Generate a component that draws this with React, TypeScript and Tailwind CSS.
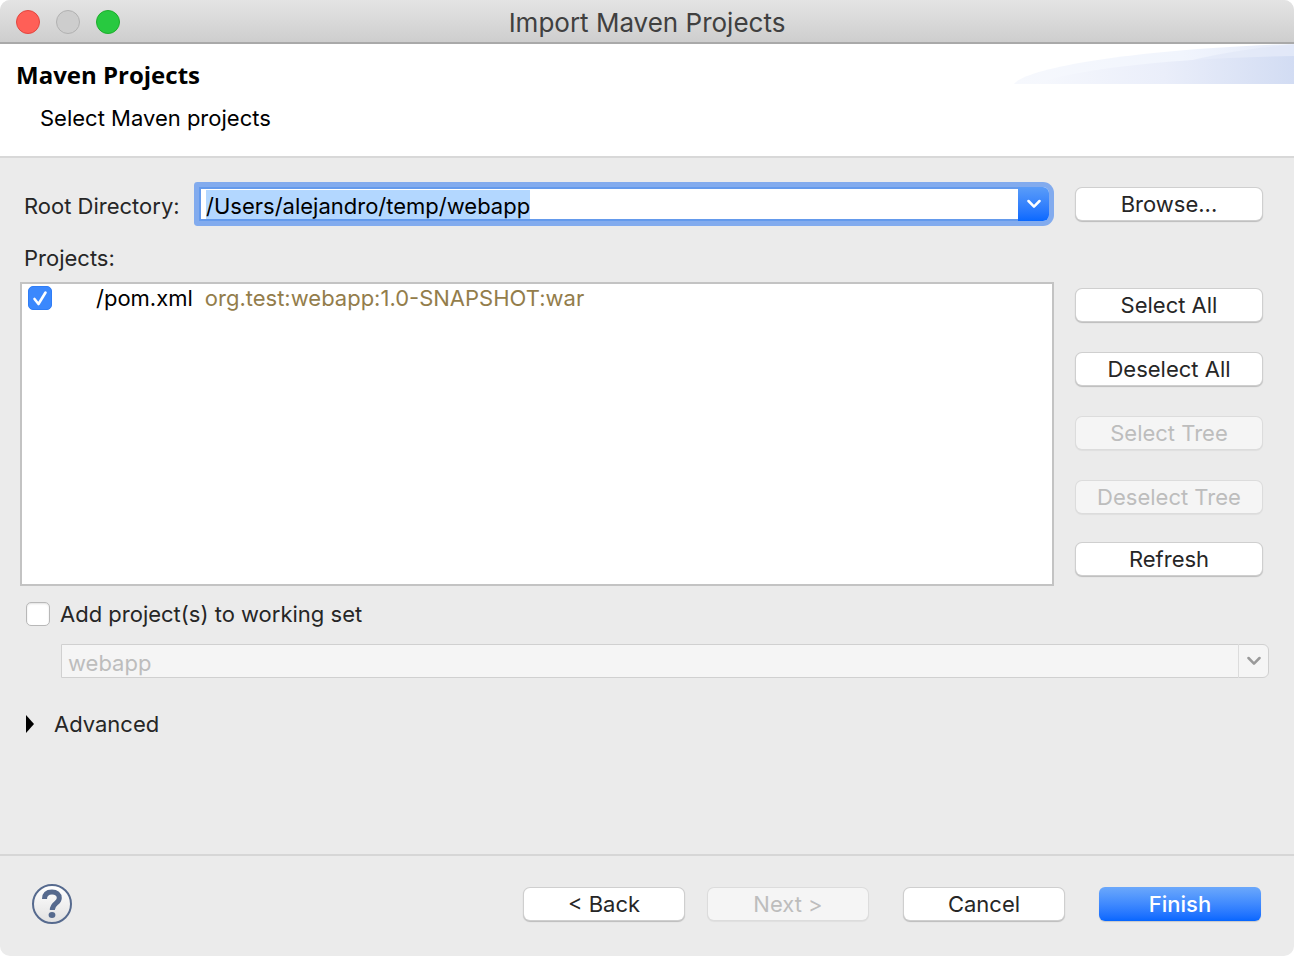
import { useEffect, useRef, useState } from "react";
import type { ButtonHTMLAttributes } from "react";
import clsx from "clsx";

type DialogButtonProps = ButtonHTMLAttributes<HTMLButtonElement> & {
  primary?: boolean;
};

function DialogButton({ primary, className, ...props }: DialogButtonProps) {
  return (
    <button
      type="button"
      className={clsx(
        "rounded-md text-center",
        primary
          ? "h-[34px] bg-linear-to-b from-[#6ba8fb] to-[#0566ff] leading-[34px] font-medium text-white shadow-[0_1px_1px_rgba(0,0,0,0.15)]"
          : "h-8 bg-white leading-8 text-[#262626] shadow-[0_0_0_1px_#cfcfcf,0_1px_1px_1px_rgba(0,0,0,0.2)] disabled:bg-[#f5f5f5] disabled:text-[#bdbdbd] disabled:shadow-[0_0_0_1px_#dcdcdc,0_1px_1px_1px_rgba(0,0,0,0.05)]",
        className,
      )}
      {...props}
    />
  );
}

function Chevron() {
  return (
    <svg width="14" height="10" viewBox="0 0 14 10" fill="none" aria-hidden="true">
      <path
        d="M1.5 2 7 7.6 12.5 2"
        stroke="currentColor"
        strokeWidth="2.5"
        strokeLinecap="round"
        strokeLinejoin="round"
      />
    </svg>
  );
}

function HeaderSwoosh() {
  return (
    <svg width="280" height="40" viewBox="0 0 280 40" aria-hidden="true">
      <defs>
        <linearGradient id="swoosh-back" x1="0" x2="1">
          <stop offset="0" stopColor="#f6f8fd" />
          <stop offset="0.6" stopColor="#f1f5fd" />
          <stop offset="1" stopColor="#e4eaf9" />
        </linearGradient>
        <linearGradient id="swoosh-front" x1="0" x2="1">
          <stop offset="0" stopColor="#f6f8fd" />
          <stop offset="0.5" stopColor="#eaeefa" />
          <stop offset="1" stopColor="#d2dcf3" />
        </linearGradient>
      </defs>
      <path d="M0 40C12 24 120 5 280 0V40Z" fill="url(#swoosh-back)" />
      <path d="M170 18C210 8 245 3 280 1V18Z" fill="#dfe6f7" opacity="0.6" />
      <path d="M20 40C60 26 150 14 280 12V40Z" fill="url(#swoosh-front)" />
    </svg>
  );
}

function TitleBar() {
  return (
    <div className="flex h-11 items-center border-b-2 border-[#a9a9a9] bg-linear-to-b from-[#e4e4e4] to-[#cecece] px-4 pt-0.5">
      <div className="flex flex-1 gap-4">
        <button type="button" aria-label="Close" className="size-6 rounded-full border border-[#e2463f] bg-[#ff5f57]" />
        <button
          type="button"
          aria-label="Minimize"
          disabled
          className="size-6 rounded-full border border-[#b1b1b1] bg-[#cdcdcd]"
        />
        <button type="button" aria-label="Zoom" className="size-6 rounded-full border border-[#1dad2b] bg-[#28c940]" />
      </div>
      <div className="pt-0.5 text-[26px] text-[#404040]">Import Maven Projects</div>
      <div className="flex-1" />
    </div>
  );
}

export default function App() {
  const rootRef = useRef<HTMLInputElement>(null);
  const [root, setRoot] = useState("/Users/alejandro/temp/webapp");
  const [pomChecked, setPomChecked] = useState(true);
  const [addToSet, setAddToSet] = useState(false);

  useEffect(() => {
    rootRef.current?.focus();
    rootRef.current?.select();
  }, []);

  return (
    <div className="min-h-screen bg-white font-['Inter','Liberation_Sans',sans-serif] text-[22px] leading-8 text-[#262626]">
      <div className="flex min-h-screen flex-col overflow-hidden rounded-[10px] bg-[#ebebeb]">
        <TitleBar />

        <header className="flex h-[114px] justify-between border-b-2 border-[#d8d8d8] bg-white text-black">
          <div className="pt-[15px] pl-4">
            <h1 className="font-['Open_Sans','Noto_Sans',sans-serif] text-2xl leading-8 font-bold">Maven Projects</h1>
            <p className="pt-[11px] pl-6">Select Maven projects</p>
          </div>
          <HeaderSwoosh />
        </header>

        <main className="flex-1 pt-7 pr-8 pl-5">
          <div className="flex items-center">
            <label htmlFor="root-directory" className="w-[179px] pt-1 pl-1 whitespace-nowrap">
              Root Directory:
            </label>
            <div className="flex h-[34px] min-w-0 flex-1 rounded-l-[1px] rounded-r-md bg-white ring-5 ring-[#82abee]">
              <input
                id="root-directory"
                ref={rootRef}
                type="text"
                value={root}
                onChange={(e) => setRoot(e.target.value)}
                className="min-w-0 flex-1 border-2 border-r-0 border-[#649aec] pt-1 pl-[5px] text-black outline-none selection:bg-[#b3d7ff] selection:text-black"
              />
              <button
                type="button"
                aria-label="Show root directories"
                className="flex w-[31px] items-center justify-center rounded-r-md bg-linear-to-b from-[#5a9cf8] to-[#0768ff] text-white"
              >
                <Chevron />
              </button>
            </div>
            <DialogButton className="ml-[27px] w-[186px]">Browse...</DialogButton>
          </div>

          <div className="pt-5 pl-1">Projects:</div>

          <div className="mt-2 flex gap-[22px]">
            <div className="h-[304px] min-w-0 flex-1 border-2 border-[#c3c3c3] bg-white text-black">
              <label className="flex h-7 items-center pl-1.5">
                <span className="relative flex size-6">
                  <input
                    type="checkbox"
                    checked={pomChecked}
                    onChange={(e) => setPomChecked(e.target.checked)}
                    className="peer size-6 appearance-none rounded-[5px] border border-[#b5b5b5] bg-white checked:border-[#2f7df6] checked:bg-[#3b88fd]"
                  />
                  <svg
                    viewBox="0 0 24 24"
                    fill="none"
                    aria-hidden="true"
                    className="pointer-events-none absolute inset-0 hidden peer-checked:block"
                  >
                    <path
                      d="M6.5 13 10.5 18 17.5 6.5"
                      stroke="white"
                      strokeWidth="2.6"
                      strokeLinecap="round"
                      strokeLinejoin="round"
                    />
                  </svg>
                </span>
                <span className="pl-11">/pom.xml</span>
                <span className="pl-3 text-[#937d4b]">org.test:webapp:1.0-SNAPSHOT:war</span>
              </label>
            </div>

            <div className="flex w-[186px] flex-col gap-8 pt-[7px]">
              <DialogButton>Select All</DialogButton>
              <DialogButton>Deselect All</DialogButton>
              <DialogButton disabled>Select Tree</DialogButton>
              <DialogButton disabled>Deselect Tree</DialogButton>
              <DialogButton className="-mt-0.5">Refresh</DialogButton>
            </div>
          </div>

          <label className="mt-3 flex w-fit items-center pl-1.5">
            <input
              type="checkbox"
              checked={addToSet}
              onChange={(e) => setAddToSet(e.target.checked)}
              className="size-6 appearance-none rounded-[5px] border border-[#b8b8b8] bg-white shadow-[inset_0_1px_2px_rgba(0,0,0,0.12)] checked:border-[#2f7df6] checked:bg-[#3b88fd]"
            />
            <span className="pl-2.5">Add project(s) to working set</span>
          </label>

          <div className="relative mt-3.5 -mr-[7px] ml-[41px] flex text-[#9a9a9a]">
            <select
              aria-label="Working set"
              disabled={!addToSet}
              className="h-[34px] flex-1 appearance-none rounded-r-md border border-[#d0d0d0] bg-[#f5f5f5] pt-0.5 pl-1.5 text-[#bdbdbd] opacity-100"
            >
              <option>webapp</option>
            </select>
            <span className="pointer-events-none absolute inset-y-0 right-0 flex w-[31px] items-center justify-center border-l border-[#dcdcdc]">
              <Chevron />
            </span>
          </div>

          <button type="button" aria-expanded="false" className="mt-[30px] flex items-center pl-1.5">
            <svg width="8" height="18" viewBox="0 0 8 18" aria-hidden="true">
              <path d="M0 0 8 9 0 18Z" fill="black" />
            </svg>
            <span className="pl-5">Advanced</span>
          </button>
        </main>

        <footer className="flex h-[102px] items-center border-t-2 border-[#d6d6d6] pr-[33px] pb-1 pl-8">
          <button
            type="button"
            aria-label="Help"
            className="flex size-10 items-center justify-center rounded-full border-2 border-[#566a8e] bg-linear-to-b from-white to-[#e2e2e2]"
          >
            <svg width="20" height="30" viewBox="0 0 20 30" fill="none" aria-hidden="true">
              <path
                d="M2.500 10C2.500 5 5.500 3 10 3C14.500 3 17.300 5.500 17.300 9C17.300 14.500 10.300 14 10.300 21"
                stroke="#566a8e"
                strokeWidth="5"
              />
              <ellipse cx="10" cy="26" rx="3.400" ry="3" fill="#566a8e" />
            </svg>
          </button>
          <div className="ml-auto flex items-center">
            <DialogButton className="w-40">&lt; Back</DialogButton>
            <DialogButton className="ml-6 w-40" disabled>
              Next &gt;
            </DialogButton>
            <DialogButton className="ml-9 w-40">Cancel</DialogButton>
            <DialogButton className="ml-[35px] w-[162px]" primary>
              Finish
            </DialogButton>
          </div>
        </footer>
      </div>
    </div>
  );
}
